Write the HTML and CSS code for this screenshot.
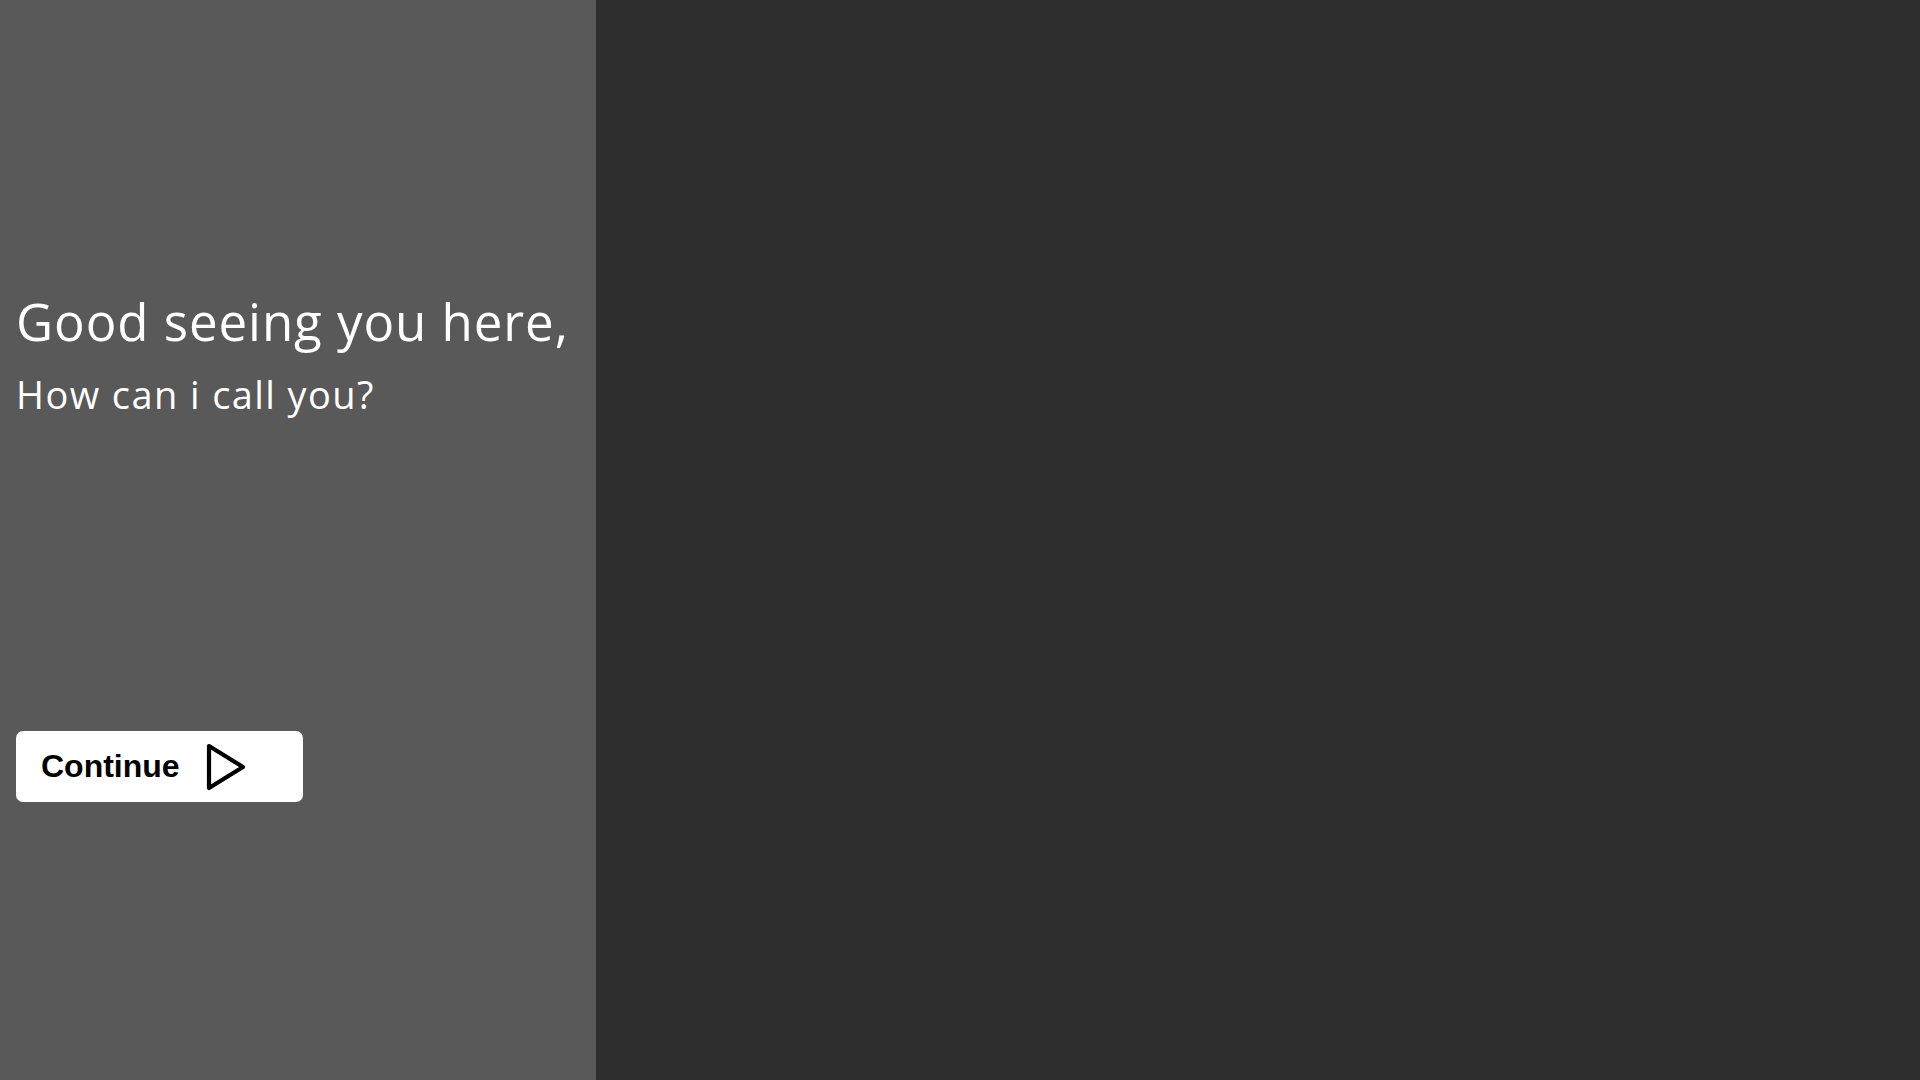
FILE: index.html
```html
<!DOCTYPE html>
<html lang="en">
<head>
<meta charset="utf-8">
<title>Welcome</title>
<link rel="stylesheet" href="styles.css">
</head>
<body>
<div class="layout">
  <section class="panel">
    <h1 class="title">Good seeing you here,</h1>
    <p class="subtitle">How can i call you?</p>
    <button class="continue" type="button">
      <span class="continue-label">Continue</span>
      <svg class="continue-icon" width="42" height="50" viewBox="0 0 42 50" aria-hidden="true">
        <path d="M4 4 L38 25 L4 46 Z" fill="none" stroke="#000" stroke-width="4.2" stroke-linejoin="round"/>
      </svg>
    </button>
  </section>
  <main class="stage"></main>
</div>
</body>
</html>
```
FILE: styles.css
```css
html, body {
  margin: 0;
  padding: 0;
  height: 100%;
}
body {
  font-family: "Open Sans", "Lato", sans-serif;
  background: #2e2e2e;
}
.layout {
  display: flex;
  height: 100vh;
}
.panel {
  width: 596px;
  flex: 0 0 596px;
  background: #595959;
  box-sizing: border-box;
  padding: 291px 16px 0 16px;
  display: flex;
  flex-direction: column;
  align-items: flex-start;
}
.stage {
  flex: 1;
  background: #2e2e2e;
}
.title {
  margin: 0;
  color: #fff;
  font-weight: 400;
  font-size: 51px;
  letter-spacing: 0.95px;
  line-height: 60px;
  white-space: nowrap;
}
.subtitle {
  margin: 20px 0 0 0;
  color: #fff;
  font-size: 38px;
  letter-spacing: 1.4px;
  line-height: 46px;
}
.continue {
  margin-top: 314px;
  width: 287px;
  height: 71px;
  border: none;
  border-radius: 7px;
  background: #fff;
  display: flex;
  align-items: center;
  padding: 0 0 0 25px;
  gap: 25px;
  cursor: pointer;
}
.continue-label {
  font-family: "Liberation Sans", Arial, sans-serif;
  font-weight: 700;
  font-size: 32px;
  color: #000;
}
.continue-icon {
  display: block;
}
```
